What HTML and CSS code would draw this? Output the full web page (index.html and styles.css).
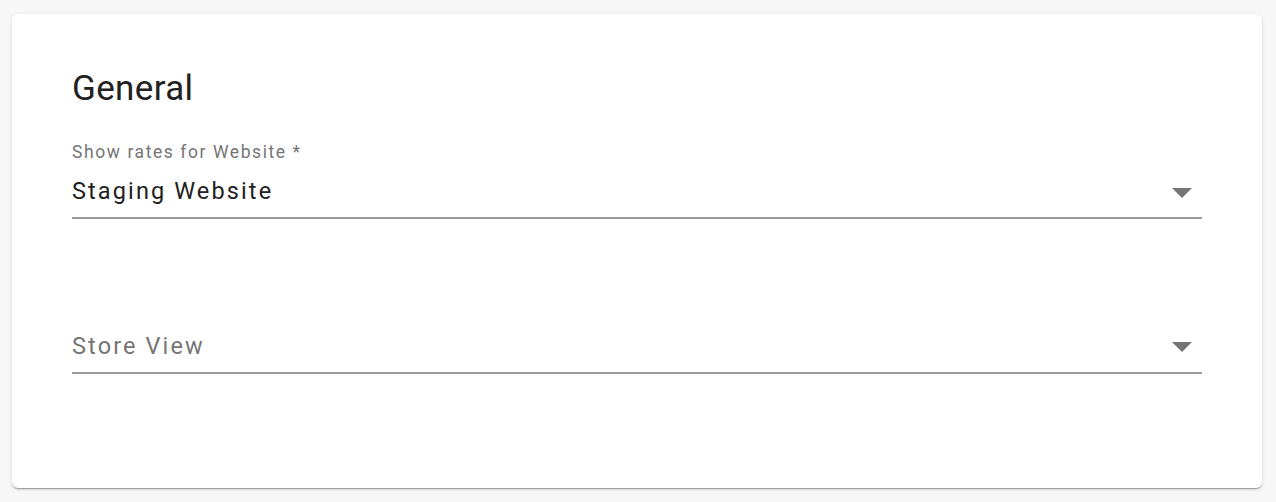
FILE: index.html
```html
<!DOCTYPE html>
<html lang="en">
<head>
<meta charset="utf-8">
<title>General</title>
<link rel="stylesheet" href="styles.css">
</head>
<body>
<div class="page">
  <section class="card">
    <h2 class="title">General</h2>
    <div class="field">
      <label class="label">Show rates for Website *</label>
      <div class="input">
        <span class="value">Staging Website</span>
        <svg class="arrow" width="20" height="28" viewBox="0 0 20 28"><polygon points="0,11 20,11 10,21" fill="#757575"/></svg>
      </div>
    </div>
    <div class="field field-empty">
      <div class="input">
        <span class="value placeholder">Store View</span>
        <svg class="arrow" width="20" height="28" viewBox="0 0 20 28"><polygon points="0,10 20,10 10,20" fill="#757575"/></svg>
      </div>
    </div>
  </section>
</div>
</body>
</html>
```
FILE: styles.css
```css
html, body {
  margin: 0;
  padding: 0;
  background: #f7f7f7;
  font-family: Roboto, "Liberation Sans", Arial, sans-serif;
}
.page {
  padding: 14px 14px 14px 12px;
  height: 502px;
  box-sizing: border-box;
}
.card {
  background: #fff;
  border-radius: 6px;
  height: 474px;
  box-sizing: border-box;
  padding: 55px 60px 0 60px;
  box-shadow: 0 2px 2px -1px rgba(0,0,0,0.28), 0 1px 1px 0 rgba(0,0,0,0.12), 0 1px 4px 0 rgba(0,0,0,0.10);
  display: flex;
  flex-direction: column;
}
.title {
  margin: 0;
  font-size: 35px;
  line-height: 40px;
  font-weight: 400;
  letter-spacing: 0.01em;
  color: #212121;
}
.field {
  display: flex;
  flex-direction: column;
  margin-top: 33px;
}
.label {
  font-size: 17.5px;
  line-height: 20px;
  letter-spacing: 0.09em;
  color: #757575;
  margin-bottom: 15px;
}
.input {
  display: flex;
  align-items: flex-start;
  padding-bottom: 12px;
  border-bottom: 2px solid #999;
}
.value {
  flex: 1;
  font-size: 23.5px;
  line-height: 28px;
  letter-spacing: 0.09em;
  color: #212121;
}
.placeholder {
  color: #757575;
}
.arrow {
  margin-right: 10px;
  flex: none;
}
.field-empty {
  margin-top: 113px;
}
```
